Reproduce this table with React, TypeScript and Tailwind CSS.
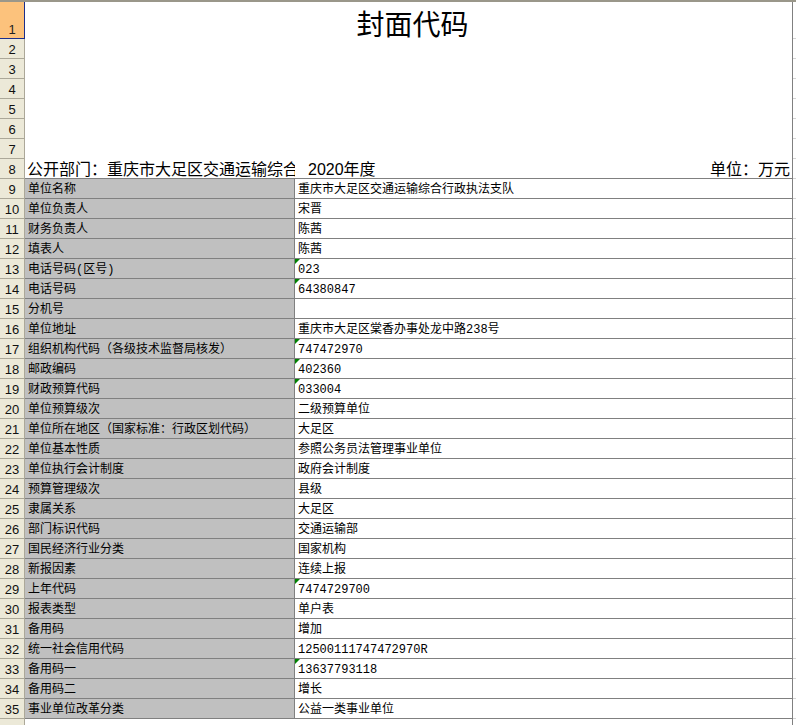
import React from "react";

type Row = { n: number; a: string; b: string; tri?: boolean };

const rows: Row[] = [
  { n: 9, a: "单位名称", b: "重庆市大足区交通运输综合行政执法支队" },
  { n: 10, a: "单位负责人", b: "宋晋" },
  { n: 11, a: "财务负责人", b: "陈茜" },
  { n: 12, a: "填表人", b: "陈茜" },
  { n: 13, a: "电话号码(区号)", b: "023", tri: true },
  { n: 14, a: "电话号码", b: "64380847", tri: true },
  { n: 15, a: "分机号", b: "" },
  { n: 16, a: "单位地址", b: "重庆市大足区棠香办事处龙中路238号" },
  { n: 17, a: "组织机构代码（各级技术监督局核发）", b: "747472970", tri: true },
  { n: 18, a: "邮政编码", b: "402360", tri: true },
  { n: 19, a: "财政预算代码", b: "033004", tri: true },
  { n: 20, a: "单位预算级次", b: "二级预算单位" },
  { n: 21, a: "单位所在地区（国家标准：行政区划代码）", b: "大足区" },
  { n: 22, a: "单位基本性质", b: "参照公务员法管理事业单位" },
  { n: 23, a: "单位执行会计制度", b: "政府会计制度" },
  { n: 24, a: "预算管理级次", b: "县级" },
  { n: 25, a: "隶属关系", b: "大足区" },
  { n: 26, a: "部门标识代码", b: "交通运输部" },
  { n: 27, a: "国民经济行业分类", b: "国家机构" },
  { n: 28, a: "新报因素", b: "连续上报" },
  { n: 29, a: "上年代码", b: "7474729700", tri: true },
  { n: 30, a: "报表类型", b: "单户表" },
  { n: 31, a: "备用码", b: "增加" },
  { n: 32, a: "统一社会信用代码", b: "12500111747472970R" },
  { n: 33, a: "备用码一", b: "13637793118", tri: true },
  { n: 34, a: "备用码二", b: "增长" },
  { n: 35, a: "事业单位改革分类", b: "公益一类事业单位" },
];

const cellFont = {
  fontFamily: '"Liberation Mono", "Noto Sans CJK SC", monospace',
};

function Hdr({ n, h, sel }: { n?: number; h: string; sel?: boolean }) {
  return (
    <div
      className={
        "w-[25px] shrink-0 flex items-end justify-center border-r border-b text-[13px] leading-[15px] pb-[1px] font-['Liberation_Sans',sans-serif] " +
        h +
        (sel
          ? " bg-[#fcc27c] border-[#1b2e8c] text-[#222]"
          : " bg-[#ece9d8] border-[#aca899] text-[#111]")
      }
    >
      {n}
    </div>
  );
}

function EmptyRow({ n }: { n: number }) {
  return (
    <div className="flex h-[20px]">
      <Hdr n={n} h="h-[20px]" />
      <div className="w-[768px] shrink-0 bg-white border-r border-[#808080]" />
      <div className="flex-1 border-b border-[#d4d4d4]" />
    </div>
  );
}

export default function App() {
  return (
    <div className="w-[796px] h-[725px] overflow-hidden bg-white select-none">
      <div className="h-[2px] bg-[#9a978a]" />
      {/* Row 1 */}
      <div className="flex h-[37px]">
        <Hdr n={1} h="h-[37px]" sel />
        <div className="w-[768px] shrink-0 bg-white border-r border-[#808080] flex items-center justify-center">
          <span
            className="text-[28px] leading-[30px] text-black pl-[8px] pt-[4px]"
            style={{ fontFamily: '"Noto Sans CJK SC", sans-serif' }}
          >
            封面代码
          </span>
        </div>
        <div className="flex-1 border-b border-[#d4d4d4]" />
      </div>
      {[2, 3, 4, 5, 6, 7].map((n) => (
        <EmptyRow key={n} n={n} />
      ))}
      {/* Row 8 */}
      <div className="flex h-[20px]">
        <Hdr n={8} h="h-[20px]" />
        <div className="w-[768px] shrink-0 flex border-r border-b border-[#808080] bg-white">
          <div
            className="w-[270px] shrink-0 overflow-hidden whitespace-nowrap text-[16px] leading-[17px] pt-[2px] pl-[2px] text-black"
            style={{ fontFamily: '"Liberation Sans", "Noto Sans CJK SC", sans-serif' }}
          >
            公开部门：重庆市大足区交通运输综合
          </div>
          <div
            className="flex-1 flex justify-between whitespace-nowrap text-[16px] leading-[17px] pt-[2px] pl-[13px] pr-[2px] text-black"
            style={{ fontFamily: '"Liberation Sans", "Noto Sans CJK SC", sans-serif' }}
          >
            <span>2020年度</span>
            <span>单位：万元</span>
          </div>
        </div>
        <div className="flex-1 border-b border-[#d4d4d4]" />
      </div>
      {rows.map((r) => (
        <div key={r.n} className="flex h-[20px]">
          <Hdr n={r.n} h="h-[20px]" />
          <div
            className="w-[270px] shrink-0 bg-[#c0c0c0] border-r border-b border-[#808080] overflow-hidden whitespace-nowrap text-[12px] leading-[16px] pt-[3px] pl-[3px] text-black"
            style={cellFont}
          >
            {r.a}
          </div>
          <div
            className="relative w-[498px] shrink-0 bg-white border-r border-b border-[#808080] overflow-hidden whitespace-nowrap text-[12px] leading-[16px] pt-[3px] pl-[3px] text-black"
            style={cellFont}
          >
            {r.tri && (
              <div className="absolute left-0 top-0 w-0 h-0 border-t-[5px] border-r-[5px] border-t-[#008000] border-r-transparent" />
            )}
            {r.b}
          </div>
          <div className="flex-1 border-b border-[#d4d4d4]" />
        </div>
      ))}
      <div className="flex h-[20px]">
        <Hdr h="h-[20px]" />
        <div className="w-[768px] shrink-0 bg-white border-r border-[#808080]" />
        <div className="flex-1" />
      </div>
    </div>
  );
}
